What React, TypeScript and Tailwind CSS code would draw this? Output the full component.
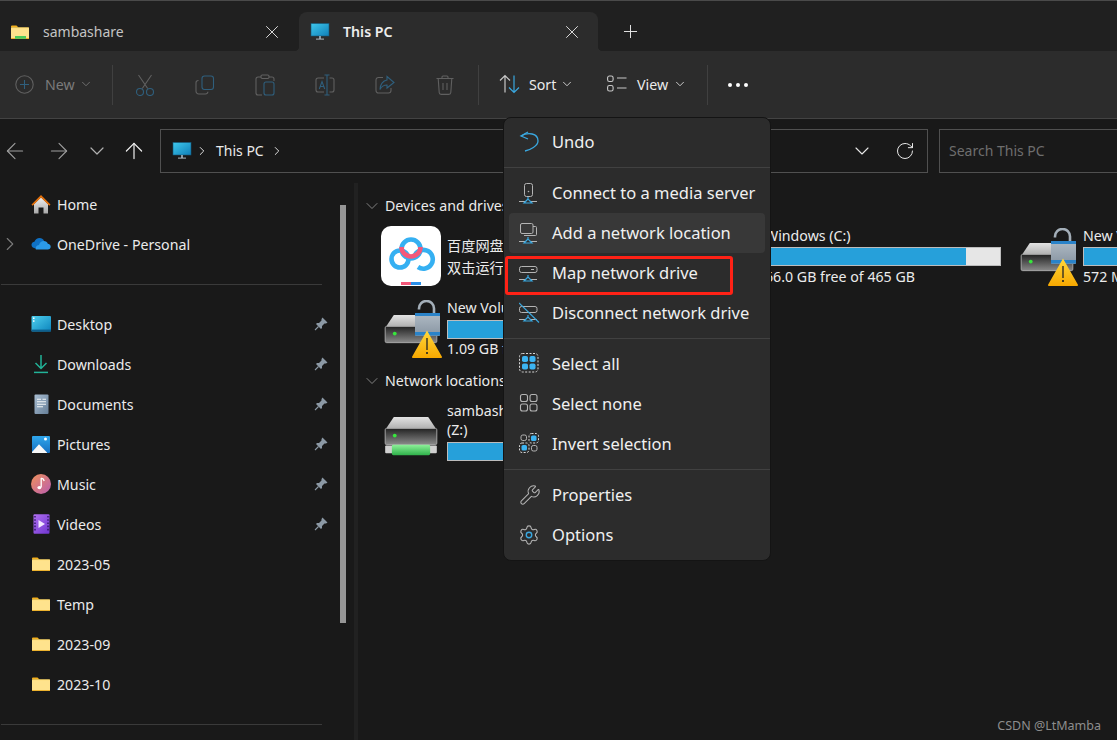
import React from "react";
import { X, Plus, ChevronDown, ChevronRight, ArrowLeft, ArrowRight, ArrowUp, RotateCw, Wrench } from "lucide-react";

const G = "#606060";
const B = "#2f5f7d";
const MG = "#b4b4b4";
const MB = "#3aa8e0";

function Monitor({ size = 20 }: { size?: number }) {
  return (
    <svg width={size} height={size} viewBox="0 0 20 20" className="shrink-0">
      <defs>
        <linearGradient id="mon" x1="0" y1="0" x2="1" y2="1">
          <stop offset="0" stopColor="#3fc8ec" />
          <stop offset="1" stopColor="#0f7fb8" />
        </linearGradient>
      </defs>
      <rect x="1" y="1.5" width="18" height="12.5" fill="url(#mon)" stroke="#15587a" strokeWidth="0.6" />
      <rect x="9" y="14" width="2" height="3" fill="#8a9aa5" />
      <rect x="6" y="16.6" width="8" height="1" fill="#aeb9c0" />
    </svg>
  );
}

function Folder({ green }: { green?: boolean }) {
  return (
    <svg width="20" height="20" viewBox="0 0 20 20" className="shrink-0">
      <path d="M1 4.5a1 1 0 0 1 1-1h4.5l2 2H1z" fill="#f4b01c" />
      <rect x="1" y="5.2" width="18" height="11.6" rx="0.5" fill="#fcd868" />
      <rect x="1" y="6.2" width="18" height="10.6" fill="#ffe38d" />
      <rect x="1" y="16" width="18" height="0.8" fill="#eaa91a" />
      {green && <rect x="5" y="14" width="11" height="2.8" fill="#4ecb5c" />}
    </svg>
  );
}

function Home() {
  return (
    <svg width="20" height="20" viewBox="0 0 20 20">
      <defs>
        <linearGradient id="hm" x1="0" y1="0" x2="0" y2="1">
          <stop offset="0" stopColor="#f0f0f0" />
          <stop offset="1" stopColor="#a8a8a8" />
        </linearGradient>
      </defs>
      <path d="M3 10 10 3.5 17 10V19.5H12.5V13.5H7.5V19.5H3z" fill="url(#hm)" />
      <path d="M0.5 10.5 10 1l9.5 9.5-1.2 1.2L10 3.6 1.7 11.7z" fill="#e8730c" />
    </svg>
  );
}

function Cloud() {
  return (
    <svg width="20" height="20" viewBox="0 0 20 20">
      <path d="M5 14.5C2 14.5 0.3 12.6 0.5 10.6 0.7 8.9 2 8 3.4 7.8 4.2 5.3 6.3 4 8.6 4c2 0 3.6 1 4.4 2.7l-3 6.3z" fill="#0f71c4" />
      <path d="M5 15.5C4 14 5.4 11 8 11c.8-2.5 2.4-4 4.8-4 2 0 3.4 1 4 2.8 1.6.1 2.9 1.3 2.9 2.9 0 1.6-1.2 2.8-3 2.8z" fill="#2b9ae8" />
    </svg>
  );
}

function Desktop() {
  return (
    <svg width="20" height="20" viewBox="0 0 20 20">
      <defs>
        <linearGradient id="dk" x1="0" y1="0" x2="1" y2="1">
          <stop offset="0" stopColor="#4fd0ee" />
          <stop offset="1" stopColor="#0c84bd" />
        </linearGradient>
      </defs>
      <rect x="0.5" y="2" width="19.5" height="15.5" rx="1" fill="url(#dk)" />
      <rect x="0.5" y="15.6" width="19.5" height="1.9" fill="#0d5f8d" />
      <rect x="2" y="3.5" width="1.5" height="1.5" fill="#fff" />
      <rect x="2" y="6.3" width="1.5" height="1.5" fill="#fff" />
    </svg>
  );
}

function Downloads() {
  return (
    <svg width="20" height="20" viewBox="0 0 20 20" fill="none" stroke="#22b398" strokeWidth="1.5">
      <path d="M10 1v13M4.5 9l5.5 5.5L15.5 9" />
      <path d="M3 18.4h14" />
    </svg>
  );
}

function Documents() {
  return (
    <svg width="20" height="20" viewBox="0 0 20 20">
      <defs>
        <linearGradient id="doc" x1="0" y1="0" x2="1" y2="1">
          <stop offset="0" stopColor="#a9bed2" />
          <stop offset="1" stopColor="#667f98" />
        </linearGradient>
      </defs>
      <rect x="3.5" y="0.5" width="14" height="19.5" rx="1" fill="url(#doc)" />
      <path d="M6 5.3h4M11.5 5.3h3.5M6 7.8h9M6 10.3h9M6 12.8h6" stroke="#f4f6f8" strokeWidth="1.1" />
    </svg>
  );
}

function Pictures() {
  return (
    <svg width="20" height="20" viewBox="0 0 20 20">
      <defs>
        <linearGradient id="pic" x1="0" y1="0" x2="0" y2="1">
          <stop offset="0" stopColor="#2fa7ec" />
          <stop offset="1" stopColor="#1670c2" />
        </linearGradient>
      </defs>
      <rect x="1" y="2" width="18" height="17" rx="1" fill="url(#pic)" />
      <circle cx="14.5" cy="5" r="1.5" fill="#fff" />
      <path d="M1 18 8 10.2 16 18.4V19H1z" fill="#f7f7f7" />
    </svg>
  );
}

function Music() {
  return (
    <svg width="20" height="20" viewBox="0 0 20 20">
      <defs>
        <linearGradient id="mus" x1="0" y1="0" x2="1" y2="1">
          <stop offset="0" stopColor="#f0925a" />
          <stop offset="1" stopColor="#b95cb0" />
        </linearGradient>
      </defs>
      <circle cx="10" cy="10" r="10" fill="url(#mus)" />
      <path d="M10.2 4v9.2M10.2 4.2c1 .2 2.6 1 3 2.8" stroke="#fff" strokeWidth="1.3" fill="none" />
      <ellipse cx="8.4" cy="13.6" rx="2" ry="1.7" fill="#fff" />
    </svg>
  );
}

function Videos() {
  return (
    <svg width="20" height="20" viewBox="0 0 20 20">
      <defs>
        <linearGradient id="vid" x1="0" y1="0" x2="1" y2="1">
          <stop offset="0" stopColor="#b06ff0" />
          <stop offset="1" stopColor="#6f35d0" />
        </linearGradient>
      </defs>
      <rect x="2.5" y="0.3" width="16" height="19.5" rx="1" fill="url(#vid)" />
      <path d="M4 2v16M17 2v16" stroke="#2c1560" strokeWidth="1.4" strokeDasharray="1.6 1.6" />
      <path d="M7.5 6v8l6.5-4z" fill="#f2e8ff" />
    </svg>
  );
}

function PinIcon() {
  return (
    <svg width="14" height="14" viewBox="0 0 14 14" className="ml-auto shrink-0">
      <path d="M8.500 0.500 13.500 5.500 12 6.500H10.500L8 9V11L7 12 2 7 3 6H5L7.500 3.500V2z" fill="#8c99a5" />
      <path d="M4.500 9.500 1 13" stroke="#8c99a5" strokeWidth="1.100" />
    </svg>
  );
}

function Drive({ net }: { net?: boolean }) {
  return (
    <svg width="54" height="44" viewBox="0 0 56 46" className="block">
      <defs>
        <linearGradient id="dt" x1="0" y1="0" x2="0" y2="1">
          <stop offset="0" stopColor="#e3e3e3" />
          <stop offset="1" stopColor="#b2b2b2" />
        </linearGradient>
        <linearGradient id="db" x1="0" y1="0" x2="0" y2="1">
          <stop offset="0" stopColor="#222" />
          <stop offset="1" stopColor="#8a8a8a" />
        </linearGradient>
        <linearGradient id="dg" x1="0" y1="0" x2="0" y2="1">
          <stop offset="0" stopColor="#8ef09a" />
          <stop offset="1" stopColor="#2fb24a" />
        </linearGradient>
      </defs>
      <path d="M2 14 10 2h36l8 12z" fill="url(#dt)" />
      <rect x="1" y="14" width="54" height="17" rx="1.5" fill="url(#db)" stroke="#a8a8a8" strokeWidth="1" />
      <circle cx="11" cy="21.5" r="2" fill="#37e63c" />
      {net && (
        <>
          <rect x="1" y="32" width="54" height="8" rx="1" fill="#d0d0d0" />
          <rect x="8" y="31" width="40" height="11" rx="1.5" fill="url(#dg)" />
        </>
      )}
    </svg>
  );
}

function LockWarn() {
  return (
    <svg width="30" height="59" viewBox="0 0 30 59" className="block">
      <defs>
        <linearGradient id="lk" x1="0" y1="0" x2="0" y2="1">
          <stop offset="0" stopColor="#b0bbc5" />
          <stop offset="1" stopColor="#8895a2" />
        </linearGradient>
        <linearGradient id="wn" x1="0" y1="0" x2="0" y2="1">
          <stop offset="0" stopColor="#ffd83c" />
          <stop offset="1" stopColor="#f7a800" />
        </linearGradient>
      </defs>
      <path d="M7 9.500V8.500a7.500 7.500 0 0 1 15 0V14" fill="none" stroke="#a3aeb8" strokeWidth="2.600" />
      <rect x="3" y="13" width="25" height="23" rx="1" fill="url(#lk)" />
      <rect x="3" y="13" width="25" height="3" fill="#2a83c9" />
      <rect x="3" y="32" width="25" height="3.500" fill="#2a83c9" />
      <path d="M15 30.500 29.800 56.500a1 1 0 0 1-.8 1.500H1a1 1 0 0 1-.8-1.500z" fill="url(#wn)" />
      <path d="M15 38v12" stroke="#222" strokeWidth="1.300" />
      <rect x="14.200" y="52" width="1.600" height="2" fill="#222" />
    </svg>
  );
}

function Baidu() {
  return (
    <div className="w-[60px] h-[60px] rounded-[10px] bg-white shrink-0">
      <svg width="60" height="60" viewBox="0 0 60 60" fill="none" strokeWidth="4.600">
        <circle cx="19" cy="33" r="8.500" stroke="#35b0f2" />
        <path d="M37 41A9.400 9.400 0 1 0 34 29" stroke="#35b0f2" />
        <circle cx="30" cy="23" r="9.500" stroke="#35b0f2" />
        <path d="M20.500 21A9.500 9.500 0 0 0 39.500 21" stroke="#f4587a" />
        <rect x="20" y="56" width="10" height="3" fill="#f4587a" stroke="none" />
        <rect x="30" y="56" width="10" height="3" fill="#2a8fe8" stroke="none" />
      </svg>
    </div>
  );
}

function Bar({ w, pct }: { w: number; pct: number }) {
  return (
    <div className="h-[19px] border border-[#bcbcbc] bg-[#e6e6e6]" style={{ width: w }}>
      <div className="h-full bg-[#26a0da]" style={{ width: `${pct}%` }} />
    </div>
  );
}

function ToolBtn({ children }: { children: React.ReactNode }) {
  return <div className="w-[60px] h-full flex items-center justify-center">{children}</div>;
}

function Sep() {
  return <div className="w-px h-[40px] bg-[#404040] shrink-0" />;
}

function Toolbar() {
  return (
    <div className="h-[67px] bg-[#2c2c2c] border-b border-[#434343] flex items-center pl-[15px] shrink-0 box-content">
      <div className="flex items-center w-[97px] text-[#7b7b7b] text-[14.200px]">
        <svg width="19" height="19" viewBox="0 0 19 19" fill="none" strokeWidth="1.1">
          <circle cx="9.5" cy="9.5" r="8.7" stroke={G} />
          <path d="M9.5 5v9M5 9.5h9" stroke={B} />
        </svg>
        <span className="ml-[11px]">New</span>
        <ChevronDown size={14} strokeWidth={1.5} className="ml-[4px]" color="#777" />
      </div>
      <Sep />
      <div className="flex items-center h-full w-[365px] pl-[2px]">
        <ToolBtn>
          <svg width="20" height="22" viewBox="0 0 20 22" fill="none" strokeWidth="1.1">
            <path d="M3.5 1 12.7 14.5M16.5 1 7.3 14.5" stroke={G} />
            <circle cx="5" cy="18" r="3.5" stroke={B} />
            <circle cx="15" cy="18" r="3.5" stroke={B} />
          </svg>
        </ToolBtn>
        <ToolBtn>
          <svg width="20" height="20" viewBox="0 0 20 20" fill="none" strokeWidth="1.1">
            <path d="M3.5 5.5h-.2A2.3 2.3 0 0 0 1 7.8v8.5a2.7 2.7 0 0 0 2.7 2.7h6.8a2.4 2.4 0 0 0 2.4-2.2" stroke={G} />
            <rect x="7" y="1" width="11.5" height="13.5" rx="2.5" stroke={B} />
          </svg>
        </ToolBtn>
        <ToolBtn>
          <svg width="20" height="22" viewBox="0 0 20 22" fill="none" strokeWidth="1.1">
            <path d="M6 3H3a2 2 0 0 0-2 2v14a2 2 0 0 0 2 2h4M14 3h3a2 2 0 0 1 2 2v2" stroke={G} />
            <rect x="6" y="1" width="8" height="3.5" rx="1.2" stroke={G} />
            <rect x="9" y="8" width="10" height="13" rx="2" stroke={B} />
          </svg>
        </ToolBtn>
        <ToolBtn>
          <svg width="20" height="22" viewBox="0 0 20 22" fill="none" strokeWidth="1.1">
            <path d="M9 4H3a2 2 0 0 0-2 2v10a2 2 0 0 0 2 2h6M14.5 4H17a2 2 0 0 1 2 2v10a2 2 0 0 1-2 2h-2.5" stroke={G} />
            <path d="M9.5 1h5M12 1v20M9.5 21h5" stroke={B} />
            <path d="M4.3 15 7 7.5 9.7 15M5.3 12.5h3.4" stroke={B} />
          </svg>
        </ToolBtn>
        <ToolBtn>
          <svg width="20" height="20" viewBox="0 0 20 20" fill="none" strokeWidth="1.1">
            <path d="M8 2.5H3.5a2.5 2.5 0 0 0-2.5 2.5v10.5a2.5 2.5 0 0 0 2.5 2.5h10a2.5 2.5 0 0 0 2.5-2.5V13" stroke={G} />
            <path d="M12 1.500 19 7.500 12 13V10C8.500 10 6.500 11.500 5 14.500 5 9.500 8 5.500 12 5z" stroke={B} />
          </svg>
        </ToolBtn>
        <ToolBtn>
          <svg width="18" height="20" viewBox="0 0 18 20" fill="none" strokeWidth="1.1" stroke={G}>
            <path d="M0.500 3.500h17M6 3.500V2a1 1 0 0 1 1-1h4a1 1 0 0 1 1 1v1.500M2.200 3.500l1 14a2 2 0 0 0 2 1.900h7.600a2 2 0 0 0 2-1.900l1-14M7 8v7M11 8v7" />
          </svg>
        </ToolBtn>
      </div>
      <Sep />
      <div className="flex items-center text-[14.200px] text-[#ebebeb] pl-[20px] w-[228px]">
        <div className="flex items-center w-[108px]">
          <svg width="21" height="20" viewBox="0 0 21 20" fill="none" strokeWidth="1.2">
            <path d="M6 18.500V1.500M1 6.500l5-5 5 5" stroke="#c8c8c8" />
            <path d="M15 1.500v17M10 13.500l5 5 5-5" stroke={MB} />
          </svg>
          <span className="ml-[9px]">Sort</span>
          <ChevronDown size={14} strokeWidth={1.4} className="ml-[4px]" />
        </div>
        <svg width="20" height="18" viewBox="0 0 20 18" fill="none" stroke="#c8c8c8" strokeWidth="1.1">
          <rect x="0.600" y="1" width="5.500" height="5.500" rx="1.800" />
          <rect x="0.600" y="10.500" width="5.500" height="5.500" rx="1.800" />
          <path d="M10 3h9.500M10 13h9.500" />
        </svg>
        <span className="ml-[10px]">View</span>
        <ChevronDown size={14} strokeWidth={1.4} className="ml-[5px]" />
      </div>
      <Sep />
      <div className="flex gap-[4px] ml-[20px]">
        <span className="w-[4px] h-[4px] rounded-full bg-white" />
        <span className="w-[4px] h-[4px] rounded-full bg-white" />
        <span className="w-[4px] h-[4px] rounded-full bg-white" />
      </div>
    </div>
  );
}

function Tabs() {
  return (
    <div className="h-[51px] bg-[#202020] border-t border-[#4a4a4a] flex items-end shrink-0">
      <div className="w-[299px] h-[39px] flex items-center pl-[10px] pr-[16px] text-[14px] text-[#c4c4c4]">
        <Folder green />
        <span className="ml-[13px]">sambashare</span>
        <X size={22} strokeWidth={1} color="#e8e8e8" className="ml-auto" />
      </div>
      <div className="w-[299px] h-[39px] bg-[#2c2c2c] rounded-t-[8px] flex items-center pl-[11px] pr-[15px] text-[14.200px] font-semibold text-[#ededed] relative">
        <span className="absolute left-[-5px] bottom-0 w-[5px] h-[5px] bg-[radial-gradient(circle_at_0_0,#202020_5px,#2c2c2c_5.500px)]" />
        <span className="absolute right-[-5px] bottom-0 w-[5px] h-[5px] bg-[radial-gradient(circle_at_100%_0,#202020_5px,#2c2c2c_5.500px)]" />
        <Monitor />
        <span className="ml-[13px]">This PC</span>
        <X size={22} strokeWidth={1} color="#e8e8e8" className="ml-auto" />
      </div>
      <div className="h-[39px] flex items-center ml-[22px]">
        <Plus size={21} strokeWidth={1.1} color="#e8e8e8" />
      </div>
    </div>
  );
}

function NavRow() {
  return (
    <div className="h-[64px] flex items-center shrink-0">
      <div className="w-[160px] flex items-center pl-[2px] shrink-0">
        <ArrowLeft size={26} strokeWidth={1} color="#a0a0a0" />
        <ArrowRight size={26} strokeWidth={1} color="#a0a0a0" className="ml-[18px]" />
        <ChevronDown size={24} strokeWidth={1.2} color="#b0b0b0" className="ml-[13px]" />
        <ArrowUp size={26} strokeWidth={1.1} color="#f2f2f2" className="ml-[12px]" />
      </div>
      <div className="w-[768px] h-[44px] border border-[#505050] flex items-center pl-[11px] pr-[12px] text-[14px] text-[#ebebeb] shrink-0">
        <Monitor />
        <ChevronRight size={14} strokeWidth={1.6} className="ml-[3px]" />
        <span className="ml-[7px] pb-[2px]">This PC</span>
        <ChevronRight size={14} strokeWidth={1.6} className="ml-[6px]" />
        <ChevronDown size={24} strokeWidth={1.1} color="#e8e8e8" className="ml-auto" />
        <RotateCw size={20} strokeWidth={1.2} color="#e8e8e8" className="ml-[21px]" />
      </div>
      <div className="flex-1 ml-[11px] h-[44px] border border-[#505050] border-r-0 flex items-center pl-[9px] pb-[2px] text-[14px] text-[#6e6e6e] whitespace-nowrap overflow-hidden">
        Search This PC
      </div>
    </div>
  );
}

type NavItem = { icon: React.ReactNode; label: string; pin?: boolean; chevron?: boolean };

function NavLine({ icon, label, pin, chevron }: NavItem) {
  return (
    <div className="h-[40px] shrink-0 flex items-center pl-[31px] pr-[8px] relative text-[14.200px] text-[#ebebeb]">
      {chevron && (
        <span className="absolute left-[-1px]">
          <ChevronRight size={22} strokeWidth={1.2} color="#7a7a7a" />
        </span>
      )}
      <span className="w-[20px] h-[20px] flex items-center justify-center shrink-0">{icon}</span>
      <span className="ml-[6px] pt-[2px]">{label}</span>
      {pin && <PinIcon />}
    </div>
  );
}

function NavDivider() {
  return (
    <div className="h-[40px] shrink-0 flex items-center">
      <div className="w-[321px] h-px bg-[#3a3a3a] ml-px" />
    </div>
  );
}

function Sidebar() {
  return (
    <div className="w-[358px] border-r-4 border-[#212121] flex shrink-0 overflow-hidden pt-px">
      <div className="w-[336px] shrink-0 flex flex-col">
        <NavLine icon={<Home />} label="Home" />
        <NavLine icon={<Cloud />} label="OneDrive - Personal" chevron />
        <NavDivider />
        <NavLine icon={<Desktop />} label="Desktop" pin />
        <NavLine icon={<Downloads />} label="Downloads" pin />
        <NavLine icon={<Documents />} label="Documents" pin />
        <NavLine icon={<Pictures />} label="Pictures" pin />
        <NavLine icon={<Music />} label="Music" pin />
        <NavLine icon={<Videos />} label="Videos" pin />
        <NavLine icon={<Folder />} label="2023-05" />
        <NavLine icon={<Folder />} label="Temp" />
        <NavLine icon={<Folder />} label="2023-09" />
        <NavLine icon={<Folder />} label="2023-10" />
        <NavDivider />
      </div>
      <div className="ml-[4px] mt-[21px] w-[6px] h-[418px] bg-[#969696] shrink-0" />
    </div>
  );
}

function SectionHead({ label }: { label: string }) {
  return (
    <div className="h-[20px] flex items-center text-[14.200px] text-[#ebebeb] whitespace-nowrap">
      <ChevronDown size={20} strokeWidth={1.1} color="#8a8a8a" className="mr-[3px] -ml-[6px]" />
      {label}
    </div>
  );
}

function Content() {
  const txt = "text-[14.200px] text-[#ebebeb] whitespace-nowrap leading-[20px]";
  return (
    <div className="flex-1 min-w-0 overflow-hidden pl-[10px] pt-[13px]">
      <SectionHead label="Devices and drives" />
      <div className="grid grid-cols-[repeat(3,318px)] ml-[13px] mt-[10px] auto-rows-[70px] w-[960px]">
        <div className="flex h-[60px]">
          <Baidu />
          <div className={`ml-[6px] mt-[8px] ${txt}`} style={{ fontFamily: '"Noto Sans CJK SC", sans-serif' }}>
            <div className="leading-[22px]">百度网盘</div>
            <div className="leading-[22px]">双击运行百度网盘</div>
          </div>
        </div>
        <div className="flex h-[60px]">
          <div className="w-[60px] shrink-0" />
          <div className="ml-[6px]">
            <div className={`${txt} mb-px`}>Windows (C:)</div>
            <Bar w={236} pct={85.5} />
            <div className={`${txt} mt-px`}>66.0 GB free of 465 GB</div>
          </div>
        </div>
        <div className="flex h-[60px]">
          <div className="w-[60px] shrink-0 pt-[15px] pl-[3px] relative">
            <Drive />
            <span className="absolute left-[31px] top-[2px]"><LockWarn /></span>
          </div>
          <div className="ml-[6px]">
            <div className={`${txt} mb-px`}>New Volume (D:)</div>
            <Bar w={236} pct={90} />
            <div className={`${txt} mt-px`}>572 MB free of 100 GB</div>
          </div>
        </div>
        <div className="flex h-[60px] col-start-1">
          <div className="w-[60px] shrink-0 pt-[17px] pl-[3px] relative">
            <Drive />
            <span className="absolute left-[31px] top-[4px]"><LockWarn /></span>
          </div>
          <div className="ml-[6px] mt-[2px]">
            <div className={`${txt} mb-[2px]`}>New Volume</div>
            <Bar w={236} pct={90} />
            <div className={txt}>1.09 GB free of 100 GB</div>
          </div>
        </div>
      </div>
      <div className="mt-[5px]">
        <SectionHead label="Network locations" />
      </div>
      <div className="flex ml-[13px] mt-[10px]">
        <div className="w-[60px] shrink-0 pt-[14px] pl-[3px]">
          <Drive net />
        </div>
        <div className="ml-[6px]">
          <div className={txt}>sambashare</div>
          <div className={`${txt} -mt-px`}>(Z:)</div>
          <div className="mt-[2px]"><Bar w={236} pct={90} /></div>
        </div>
      </div>
    </div>
  );
}

function NetBase({ y }: { y: number }) {
  return (
    <>
      <path d={`M0 ${y}.500h18`} stroke={MG} strokeWidth="1" />
      <path d={`M9 ${y - 4}V${y - 2}M9 ${y - 2}L5 ${y + 2}H13Z`} stroke={MB} strokeWidth="1.200" fill="#2c2c2c" />
    </>
  );
}

function MenuIcon({ name }: { name: string }) {
  const common = { width: 22, height: 22, viewBox: "0 0 22 22", fill: "none" as const };
  switch (name) {
    case "undo":
      return (
        <svg {...common} stroke={MB} strokeWidth="1.300">
          <path d="M9 1 2 5l7 3" />
          <path d="M2 5c7-4 17-3 17 5 0 5-8 9-13 10" />
        </svg>
      );
    case "media":
      return (
        <svg {...common}>
          <rect x="5.500" y="1.500" width="8" height="13" rx="2" stroke={MG} />
          <circle cx="9.500" cy="9.500" r="0.800" fill={MG} />
          <NetBase y={19} />
        </svg>
      );
    case "add":
      return (
        <svg {...common}>
          <path d="M14 4.500h2.500a1 1 0 0 1 1 1v7a1 1 0 0 1-1 1H5" stroke={MG} />
          <rect x="1.500" y="1.500" width="12.500" height="10" rx="1.500" stroke={MG} fill="#383838" />
          <NetBase y={19} />
        </svg>
      );
    case "map":
      return (
        <svg {...common}>
          <rect x="0.500" y="4.500" width="17.500" height="6" rx="2" stroke={MG} />
          <path d="M12 7.500h3" stroke={MG} />
          <NetBase y={17} />
        </svg>
      );
    case "disc":
      return (
        <svg {...common}>
          <rect x="0.500" y="4.500" width="17.500" height="6" rx="2" stroke={MG} />
          <NetBase y={17} />
          <path d="M0 1 20 20.500" stroke={MB} strokeWidth="1.100" />
        </svg>
      );
    case "all":
      return (
        <svg {...common}>
          <rect x="0.500" y="0.500" width="18.500" height="18.500" rx="3" stroke="#d8d8d8" strokeDasharray="2 1.500" />
          <rect x="3" y="3" width="6" height="6" rx="1.800" fill="#3cb4f2" />
          <rect x="10.500" y="3" width="6" height="6" rx="1.800" fill="#3cb4f2" />
          <rect x="3" y="10.500" width="6" height="6" rx="1.800" fill="#3cb4f2" />
          <rect x="10.500" y="10.500" width="6" height="6" rx="1.800" fill="#3cb4f2" />
        </svg>
      );
    case "none":
      return (
        <svg {...common} stroke={MG} strokeWidth="1.100">
          <rect x="1.500" y="1.500" width="7" height="7" rx="2" />
          <rect x="11" y="1.500" width="7" height="7" rx="2" />
          <rect x="1.500" y="11" width="7" height="7" rx="2" />
          <rect x="11" y="11" width="7" height="7" rx="2" />
        </svg>
      );
    case "invert":
      return (
        <svg {...common}>
          <rect x="2" y="2" width="5.500" height="5.500" rx="1.800" stroke={MG} />
          <rect x="12.500" y="12.500" width="5.500" height="5.500" rx="1.800" stroke={MG} />
          <rect x="10" y="0.500" width="9.500" height="9.500" rx="2.500" stroke="#d8d8d8" strokeDasharray="2 1.500" />
          <rect x="0.500" y="10" width="9.500" height="9.500" rx="2.500" stroke="#d8d8d8" strokeDasharray="2 1.500" />
          <rect x="12" y="2.500" width="5.500" height="5.500" rx="1.600" fill="#3cb4f2" />
          <rect x="2.500" y="12" width="5.500" height="5.500" rx="1.600" fill="#3cb4f2" />
        </svg>
      );
    case "props":
      return <Wrench size={22} strokeWidth={1.1} color={MG} />;
    default:
      return (
        <svg width="22" height="22" viewBox="0 0 24 24" fill="none" className="-ml-[1px]">
          <path
            d="M9.671 4.136a2.34 2.34 0 0 1 4.659 0 2.34 2.34 0 0 0 3.319 1.915 2.34 2.34 0 0 1 2.33 4.033 2.34 2.34 0 0 0 0 3.831 2.34 2.34 0 0 1-2.33 4.033 2.34 2.34 0 0 0-3.319 1.915 2.34 2.34 0 0 1-4.659 0 2.34 2.34 0 0 0-3.32-1.915 2.34 2.34 0 0 1-2.33-4.033 2.34 2.34 0 0 0 0-3.831A2.34 2.34 0 0 1 6.35 6.051a2.34 2.34 0 0 0 3.319-1.915"
            stroke={MG}
            strokeWidth="1.200"
          />
          <circle cx="12" cy="12" r="3" stroke={MB} strokeWidth="1.500" />
        </svg>
      );
  }
}

function MenuItem({ icon, label, hover }: { icon: string; label: string; hover?: boolean }) {
  return (
    <div className={`h-[40px] mx-[5px] rounded-[4px] flex items-center pl-[10px] ${hover ? "bg-[#383838]" : ""}`}>
      <span className="w-[22px] h-[22px] flex items-center justify-start shrink-0">
        <MenuIcon name={icon} />
      </span>
      <span className="ml-[11px] whitespace-nowrap">{label}</span>
    </div>
  );
}

function MenuSep() {
  return <div className="h-px bg-[#414141] my-[5px]" />;
}

function Menu() {
  return (
    <div className="absolute left-[503px] top-[117px] w-[268px] h-[444px] rounded-[8px] bg-[#2c2c2c] border border-[#141414] py-[4px] text-[16.500px] text-[#f0f0f0]">
      <MenuItem icon="undo" label="Undo" />
      <MenuSep />
      <MenuItem icon="media" label="Connect to a media server" />
      <MenuItem icon="add" label="Add a network location" hover />
      <MenuItem icon="map" label="Map network drive" />
      <MenuItem icon="disc" label="Disconnect network drive" />
      <MenuSep />
      <MenuItem icon="all" label="Select all" />
      <MenuItem icon="none" label="Select none" />
      <MenuItem icon="invert" label="Invert selection" />
      <MenuSep />
      <MenuItem icon="props" label="Properties" />
      <MenuItem icon="opts" label="Options" />
    </div>
  );
}

export default function App() {
  return (
    <div
      className="w-[1117px] h-[740px] relative overflow-hidden bg-[#191919] flex flex-col"
      style={{ fontFamily: '"Noto Sans", "Noto Sans CJK SC", sans-serif' }}
    >
      <Tabs />
      <Toolbar />
      <NavRow />
      <div className="flex flex-1 min-h-0">
        <Sidebar />
        <Content />
      </div>
      <Menu />
      <div className="absolute left-[505px] top-[256px] w-[228px] h-[39px] border-[3px] border-[#ff2216] rounded-[3px]" />
      <div className="absolute right-[16px] top-[717px] text-[12.500px] text-[#8d8d8d]">CSDN @LtMamba</div>
    </div>
  );
}
